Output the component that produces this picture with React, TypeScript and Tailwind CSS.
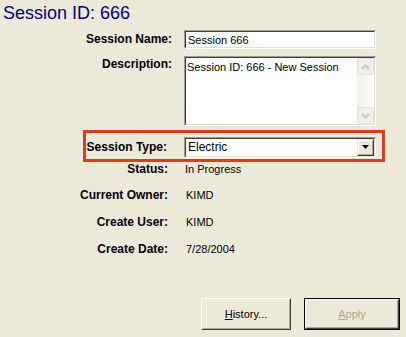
import React from 'react';

const Sunken: React.FC<{ className?: string; children?: React.ReactNode }> = ({ className = '', children }) => (
    <div className={`border border-t-[#9d9d92] border-l-[#9d9d92] border-b-white border-r-white ${className}`}>
        <div className="h-full w-full border border-t-[#404040] border-l-[#404040] border-b-[#e2dfd2] border-r-[#e2dfd2] bg-white">
            {children}
        </div>
    </div>
);

const Chevron: React.FC<{ up?: boolean }> = ({ up }) => (
    <svg width="9" height="6" viewBox="0 0 9 6">
        <path d={up ? 'M1 5 L4.5 1.5 L8 5' : 'M1 1 L4.5 4.5 L8 1'} fill="none" stroke="#c9c7bc" strokeWidth={2} />
    </svg>
);

const ScrollButton: React.FC<{ up?: boolean }> = ({ up }) => (
    <div className="h-[17px] w-full flex items-center justify-center rounded-[3px] border border-[#e4e2d8] bg-[#f0efe8]">
        <Chevron up={up} />
    </div>
);

export default function App() {
    return (
        <div className="w-[406px] h-[337px] overflow-hidden bg-[#ece9d8] text-black text-[11px] leading-[13px] font-['Liberation_Sans',Arial,sans-serif]">
            <div className="pl-[3px] pt-[1px] h-[25px] text-[18px] leading-[24px] text-[#000080]">Session ID: 666</div>

            <div className="mt-[5px] flex items-center h-[19px]">
                <div className="w-[172px] text-right font-bold text-[12px]">Session Name:</div>
                <Sunken className="ml-[12px] w-[192px] h-[19px]">
                    <div className="pl-[2px] pt-[2px]">Session 666</div>
                </Sunken>
            </div>

            <div className="mt-[7px] flex items-start h-[70px]">
                <div className="w-[172px] text-right font-bold text-[12px] pt-[2px]">Description:</div>
                <Sunken className="ml-[12px] w-[192px] h-[70px]">
                    <div className="flex h-full">
                        <div className="flex-1 pl-[1px] pt-[3px]">Session ID: 666 - New Session</div>
                        <div className="w-[17px] h-full flex flex-col bg-gradient-to-r from-[#f3f1ea] to-[#fdfdfb]">
                            <ScrollButton up />
                            <div className="flex-1" />
                            <ScrollButton />
                        </div>
                    </div>
                </Sunken>
            </div>

            <div className="mt-[4px] ml-[83px] w-[302px] h-[32px] border-[3px] border-[#d8401b] flex items-center pt-[2px]">
                <div className="w-[81px] text-right font-bold text-[12px]">Session Type:</div>
                <Sunken className="ml-[17px] w-[192px] h-[21px]">
                    <div className="flex h-full items-center">
                        <div className="flex-1 pl-[2px] text-[12px]">Electric</div>
                        <div className="w-[17px] h-full border border-t-[#ece9d8] border-l-[#ece9d8] border-b-[#404040] border-r-[#404040]">
                            <div className="h-full w-full flex items-center justify-center bg-[#ece9d8] border border-t-white border-l-white border-b-[#aca899] border-r-[#aca899]">
                                <svg width="7" height="4" viewBox="0 0 7 4"><path d="M0 0 H7 L3.5 4 Z" fill="#000" /></svg>
                            </div>
                        </div>
                    </div>
                </Sunken>
            </div>

            <div className="flex h-[14px] leading-[14px]">
                <div className="w-[168px] text-right font-bold text-[12px]">Status:</div>
                <div className="ml-[17px]">In Progress</div>
            </div>
            <div className="mt-[12px] flex h-[14px] leading-[14px]">
                <div className="w-[168px] text-right font-bold text-[12px]">Current Owner:</div>
                <div className="ml-[18px]">KIMD</div>
            </div>
            <div className="mt-[13px] flex h-[14px] leading-[14px]">
                <div className="w-[168px] text-right font-bold text-[12px]">Create User:</div>
                <div className="ml-[18px]">KIMD</div>
            </div>
            <div className="mt-[13px] flex h-[14px] leading-[14px]">
                <div className="w-[168px] text-right font-bold text-[12px]">Create Date:</div>
                <div className="ml-[18px]">7/28/2004</div>
            </div>

            <div className="mt-[42px] flex">
                <button className="ml-[201px] w-[90px] h-[32px] border border-t-white border-l-white border-b-[#404040] border-r-[#404040] bg-[#ece9d8]">
                    <div className="h-full w-full flex items-center justify-center border border-t-[#ece9d8] border-l-[#ece9d8] border-b-[#aca899] border-r-[#aca899]">
                        <span><span className="underline">H</span>istory...</span>
                    </div>
                </button>
                <button className="ml-[13px] w-[96px] h-[32px] border border-black bg-[#ece9d8]">
                    <div className="h-full w-full border border-t-white border-l-white border-b-[#404040] border-r-[#404040]">
                        <div className="h-full w-full flex items-center justify-center border border-t-[#ece9d8] border-l-[#ece9d8] border-b-[#aca899] border-r-[#aca899] text-[#aca899]">
                            <span><span className="underline">A</span>pply</span>
                        </div>
                    </div>
                </button>
            </div>
        </div>
    );
}
